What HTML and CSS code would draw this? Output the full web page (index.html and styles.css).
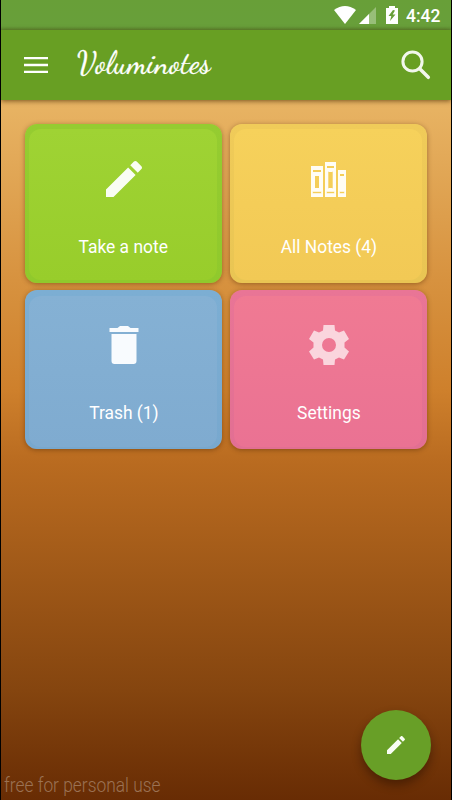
FILE: index.html
```html
<!DOCTYPE html>
<html lang="en">
<head>
<meta charset="utf-8">
<title>Voluminotes</title>
<link rel="stylesheet" href="styles.css">
</head>
<body>
<div class="screen">
  <div class="status">
    <svg class="wifi" width="22" height="18" viewBox="0 0 22 18"><path d="M0 4Q11-4 22 4L11 18Z" fill="#fff"/></svg>
    <svg class="signal" width="17" height="17" viewBox="0 0 17 17"><path d="M17 0V17H0Z" fill="#fff" opacity=".32"/><path d="M10 7V17H0Z" fill="#fff"/></svg>
    <svg class="battery" width="12" height="18" viewBox="0 0 12 18"><path fill="#fff" fill-rule="evenodd" d="M3 0H9V2H12V18H0V2H3ZM7 4L2.5 10H5.3L4 15L9.5 8.5H6.7L9 4.5Z"/></svg>
    <span class="clock">4:42</span>
  </div>
  <header class="appbar">
    <svg class="menu" width="24" height="16" viewBox="0 0 24 16"><path d="M0 1H24M0 8H24M0 15H24" stroke="#fff" stroke-width="2.3"/></svg>
    <h1 class="title">Voluminotes</h1>
    <svg class="search" width="30" height="30" viewBox="0 0 30 30" fill="none" stroke="#f2f7ec"><circle cx="11.500" cy="11.500" r="9.600" stroke-width="3"/><path d="M19 19L27.300 27.300" stroke-width="3.500" stroke-linecap="round"/></svg>
  </header>
  <main class="grid">
    <div class="card green">
      <div class="icon"><svg width="48" height="48" viewBox="0 0 24 24" fill="#f9fdf3"><path d="M3 17.25V21h3.75L17.81 9.94l-3.75-3.75L3 17.25zM20.71 7.04c.39-.39.39-1.02 0-1.41l-2.34-2.34c-.39-.39-1.02-.39-1.41 0l-1.83 1.83 3.75 3.75 1.83-1.83z"/></svg></div>
      <span class="label">Take a note</span>
    </div>
    <div class="card yellow">
      <div class="icon"><svg width="36" height="48" viewBox="0 0 36 48"><path fill="#fffdf5" fill-rule="evenodd" d="M0 11H12V42H0ZM2 15V17H10V15ZM4 21V33H8V21ZM2 37V38H10V37ZM14 7H25V42H14ZM16 11V13H23V11ZM17.500 17V33H21.500V17ZM16 37V38H23V37ZM27 15H35V42H27ZM29 19V21H33V19ZM29 37V38H33V37Z"/><path d="M1.500 36.500H10.500V38.500H1.500ZM15.500 36.500H23.500V38.500H15.500ZM28.500 36.500H33.500V38.500H28.500ZM17 16.500H18V33.500H17ZM21 16.500H22V33.500H21Z" fill="#f4cd58" opacity=".4"/></svg></div>
      <span class="label">All Notes (4)</span>
    </div>
    <div class="card lower blue">
      <div class="icon"><svg width="48" height="48" viewBox="0 0 48 48" fill="#f8fbfe"><path d="M9.500 6H17.500L20 4H28L30.500 6H38.500V10H9.500ZM11.500 12H36.500V39Q36.500 42 33.500 42H14.500Q11.500 42 11.500 39Z"/></svg></div>
      <span class="label">Trash (1)</span>
    </div>
    <div class="card lower pink">
      <div class="icon"><svg width="40" height="48" viewBox="0 0 40 48"><path fill="#fad5dd" fill-rule="evenodd" d="M14.500 3H25.500L26 8.500L30 10.500L35 8.500L40 17L35.500 20.500V25.500L40 29.500L35 37.500L30 35.500L26 37.500L25.500 43H14.500L14 37.500L10 35.500L5 37.500L0 29.500L4.500 25.500V20.500L0 17L5 8.500L10 10.500L14 8.500ZM20 16A7 7 0 1 0 20 30A7 7 0 1 0 20 16Z"/></svg></div>
      <span class="label">Settings</span>
    </div>
  </main>
  <footer class="footer">free for personal use</footer>
  <div class="fab"><svg width="24" height="24" viewBox="0 0 24 24" fill="#f9fdf3"><path d="M3 17.25V21h3.75L17.81 9.94l-3.75-3.75L3 17.25zM20.71 7.04c.39-.39.39-1.02 0-1.41l-2.34-2.34c-.39-.39-1.02-.39-1.41 0l-1.83 1.83 3.75 3.75 1.83-1.83z"/></svg></div>
</div>
</body>
</html>
```
FILE: styles.css
```css
* { box-sizing: border-box; }
body { margin: 0; font-family: Roboto, "Liberation Sans", sans-serif; }
.screen {
  position: relative;
  display: flex;
  flex-direction: column;
  width: 452px;
  height: 800px;
  overflow: hidden;
  border: solid #000;
  border-width: 0 1px;
  background: linear-gradient(#e9b667 0, #e8b464 100px, #d7923f 280px, #ce802c 390px, #b96b20 463px, #85450f 690px, #682c04 800px);
}
.status {
  display: flex;
  align-items: center;
  justify-content: flex-end;
  height: 30px;
  padding-right: 10px;
  background: linear-gradient(#689f38 0, #689f3a 26px, #5e9033 30px);
  color: #fff;
}
.signal { margin: 1px 10px 0 3px; }
.clock { width: 35px; margin: 1px 0 0 8px; font-size: 18px; font-weight: 500; line-height: 20px; white-space: nowrap; transform: scaleX(.97); transform-origin: left; }
.appbar {
  display: flex;
  align-items: center;
  height: 70px;
  padding: 0 20px 0 23px;
  background: #689f23;
  box-shadow: 0 1px 5px rgba(70, 40, 0, .7);
}
.title {
  width: 140px;
  margin: 0 0 4px 29px;
  color: #fff;
  font: 400 30px/36px "Dancing Script", "Pacifico", cursive;
  letter-spacing: .4px;
  -webkit-text-stroke: .3px #fff;
  white-space: nowrap;
}
.search { margin-left: auto; }
.grid {
  display: grid;
  grid-template-columns: 197px 197px;
  grid-template-rows: 158.500px 158.500px;
  gap: 7.500px 8px;
  padding: 24px 24px 0;
}
.card {
  position: relative;
  display: flex;
  flex-direction: column;
  align-items: center;
  border-radius: 12px;
  color: #fff;
  box-shadow: 0 1px 5px rgba(70, 35, 0, .45);
}
.card::before {
  content: "";
  position: absolute;
  inset: 5px 5px 3px 4px;
  border-radius: 12px;
}
.lower::before { top: 6px; bottom: 2px; }
.icon, .label { position: relative; }
.green { background: linear-gradient(#95cc31, #90c92c); }
.green::before { background: linear-gradient(#9fd334, #98cd2b); }
.yellow { background: linear-gradient(#f0cb59, #e9c553); }
.yellow::before { background: linear-gradient(#f6d15b, #f2c955); }
.blue { background: linear-gradient(#7caed3, #78a8ce); }
.blue::before { background: linear-gradient(#85b1d4, #7fabd0); }
.pink { background: linear-gradient(#e97596, #e26f93); }
.pink::before { background: linear-gradient(#f07a93, #ea7293); }
.icon { height: 48px; margin-top: 31px; }
.lower .icon { margin-top: 32px; }
.label { margin-top: 33px; font-size: 18px; line-height: 22px; white-space: nowrap; transform: scaleX(.967); }
.lower .label { margin-top: 32px; }
.footer {
  align-self: flex-start;
  margin: auto 0 3px 3px;
  color: #9b7254;
  font-size: 20px;
  font-weight: 300;
  line-height: 24px;
  transform: scaleX(.868);
  transform-origin: left;
}
.fab {
  position: absolute;
  right: 20px;
  bottom: 20px;
  display: flex;
  align-items: center;
  justify-content: center;
  width: 70px;
  height: 70px;
  border-radius: 50%;
  background: #689f27;
  box-shadow: 0 5px 10px rgba(30, 10, 0, .45);
}
```
